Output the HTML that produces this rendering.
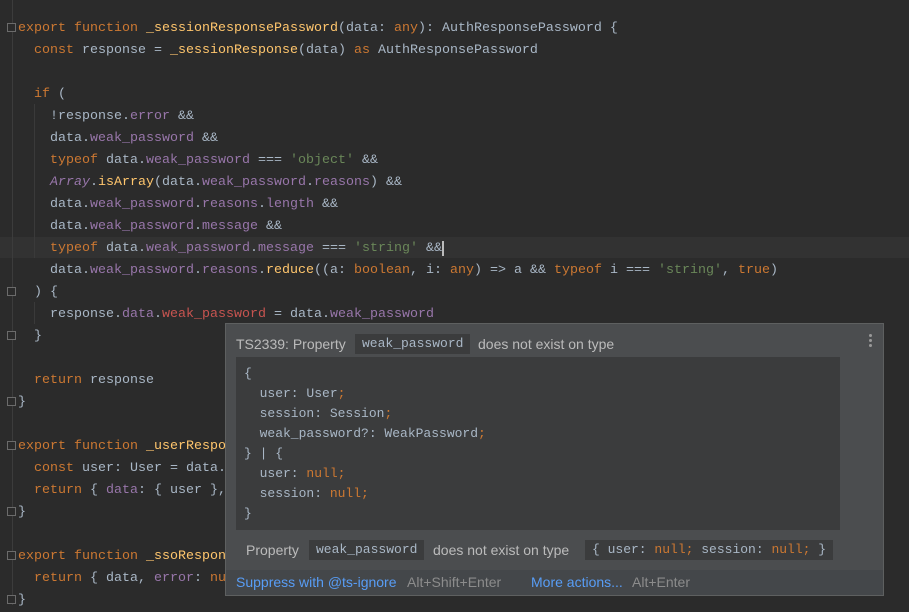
<!DOCTYPE html>
<html><head><meta charset="utf-8"><style>
body{margin:0;width:909px;height:605px;background:#2b2b2b;overflow:hidden;position:relative;font-family:"Liberation Mono",monospace;}
.code{position:absolute;left:18px;top:18px;font-size:13.33px;color:#a9b7c6;}
.l{height:22px;line-height:22px;white-space:pre;}
.k{color:#cc7832}.f{color:#ffc66d}.p{color:#9876aa}.s{color:#6a8759}.r{color:#c75450}.i{color:#9876aa;font-style:italic}
.hl{position:absolute;left:0;top:237px;width:909px;height:21px;background:#323232;}
.gut{position:absolute;left:12px;top:0;width:1px;height:605px;background:#3c3c3c;}
.ig{position:absolute;width:1px;background:#3a3a3a;}
.fold{position:absolute;left:7px;width:9px;height:9px;border:1px solid #6b6b6b;box-sizing:border-box;background:#2b2b2b;}
.pop{position:absolute;left:225px;top:323px;width:659px;height:273px;background:#4b4d4f;border:1px solid #5e6060;box-sizing:border-box;font-family:"Liberation Sans",sans-serif;color:#bbbbbb;}
.t{position:absolute;font-size:14px;white-space:pre;}
.cb{position:absolute;background:#3b3c3d;font-family:"Liberation Mono",monospace;font-size:13px;color:#a9b7c6;padding:0 7px;white-space:pre;}
.blk{position:absolute;left:10px;top:33px;width:604px;height:173px;background:#3b3c3d;font-family:"Liberation Mono",monospace;font-size:13px;color:#a9b7c6;}
.blk div{position:absolute;left:8px;white-space:pre;}
.foot{position:absolute;left:0;bottom:0;width:657px;height:25px;background:#44474a;font-size:14px;}
</style></head><body>
<div class="hl"></div>
<div class="gut"></div>
<div class="ig" style="left:34px;top:104px;height:154px"></div>
<div class="ig" style="left:34px;top:302px;height:22px"></div>
<div class="fold" style="top:23px"></div>
<div class="fold" style="top:287px"></div>
<div class="fold" style="top:331px"></div>
<div class="fold" style="top:397px"></div>
<div class="fold" style="top:441px"></div>
<div class="fold" style="top:507px"></div>
<div class="fold" style="top:551px"></div>
<div class="fold" style="top:595px"></div>
<div class="code"><div class="l"><span class="k">export function </span><span class="f">_sessionResponsePassword</span>(data: <span class="k">any</span>): AuthResponsePassword {</div><div class="l">  <span class="k">const </span>response = <span class="f">_sessionResponse</span>(data) <span class="k">as </span>AuthResponsePassword</div><div class="l"> </div><div class="l">  <span class="k">if </span>(</div><div class="l">    !response.<span class="p">error</span> &amp;&amp;</div><div class="l">    data.<span class="p">weak_password</span> &amp;&amp;</div><div class="l">    <span class="k">typeof </span>data.<span class="p">weak_password</span> === <span class="s">'object'</span> &amp;&amp;</div><div class="l">    <span class="i">Array</span>.<span class="f">isArray</span>(data.<span class="p">weak_password</span>.<span class="p">reasons</span>) &amp;&amp;</div><div class="l">    data.<span class="p">weak_password</span>.<span class="p">reasons</span>.<span class="p">length</span> &amp;&amp;</div><div class="l">    data.<span class="p">weak_password</span>.<span class="p">message</span> &amp;&amp;</div><div class="l">    <span class="k">typeof </span>data.<span class="p">weak_password</span>.<span class="p">message</span> === <span class="s">'string'</span> &amp;&amp;<span style="border-left:2px solid #bbb"></span></div><div class="l">    data.<span class="p">weak_password</span>.<span class="p">reasons</span>.<span class="f">reduce</span>((a: <span class="k">boolean</span>, i: <span class="k">any</span>) =&gt; a &amp;&amp; <span class="k">typeof </span>i === <span class="s">'string'</span>, <span class="k">true</span>)</div><div class="l">  ) {</div><div class="l">    response.<span class="p">data</span>.<span class="r">weak_password</span> = data.<span class="p">weak_password</span></div><div class="l">  }</div><div class="l"> </div><div class="l">  <span class="k">return </span>response</div><div class="l">}</div><div class="l"> </div><div class="l"><span class="k">export function </span><span class="f">_userResponse</span>(data: <span class="k">any</span>) {</div><div class="l">  <span class="k">const </span>user: User = data.user</div><div class="l">  <span class="k">return </span>{ <span class="p">data</span>: { user }, error: <span class="k">null</span> }</div><div class="l">}</div><div class="l"> </div><div class="l"><span class="k">export function </span><span class="f">_ssoResponse</span>(data: <span class="k">any</span>) {</div><div class="l">  <span class="k">return </span>{ data, <span class="p">error</span>: <span class="k">null</span> }</div><div class="l">}</div></div>
<div class="pop">
<div class="t" style="left:10px;top:12px">TS2339: Property</div>
<div class="cb" style="left:129px;top:10px;height:20px;line-height:20px">weak_password</div>
<div class="t" style="left:252px;top:12px">does not exist on type</div>
<div style="position:absolute;left:643px;top:10px;width:3px;height:3px;background:#999;border-radius:2px;box-shadow:0 5px #999,0 10px #999"></div>
<div class="blk">
<div style="top:9px">{</div>
<div style="top:29px">  user: User<span class="k">;</span></div>
<div style="top:49px">  session: Session<span class="k">;</span></div>
<div style="top:69px">  weak_password?: WeakPassword<span class="k">;</span></div>
<div style="top:89px">} | {</div>
<div style="top:109px">  user: <span class="k">null;</span></div>
<div style="top:129px">  session: <span class="k">null;</span></div>
<div style="top:149px">}</div>
</div>
<div class="t" style="left:20px;top:218px">Property</div>
<div class="cb" style="left:83px;top:216px;height:20px;line-height:20px">weak_password</div>
<div class="t" style="left:207px;top:218px">does not exist on type</div>
<div class="cb" style="left:359px;top:216px;height:20px;line-height:20px">{ user: <span class="k">null;</span> session: <span class="k">null;</span> }</div>
<div class="foot">
<span class="t" style="left:10px;top:4px;color:#589df6">Suppress with @ts-ignore</span>
<span class="t" style="left:181px;top:4px;color:#8c8c8c">Alt+Shift+Enter</span>
<span class="t" style="left:305px;top:4px;color:#589df6">More actions...</span>
<span class="t" style="left:406px;top:4px;color:#8c8c8c">Alt+Enter</span>
</div>
</div>
</body></html>
